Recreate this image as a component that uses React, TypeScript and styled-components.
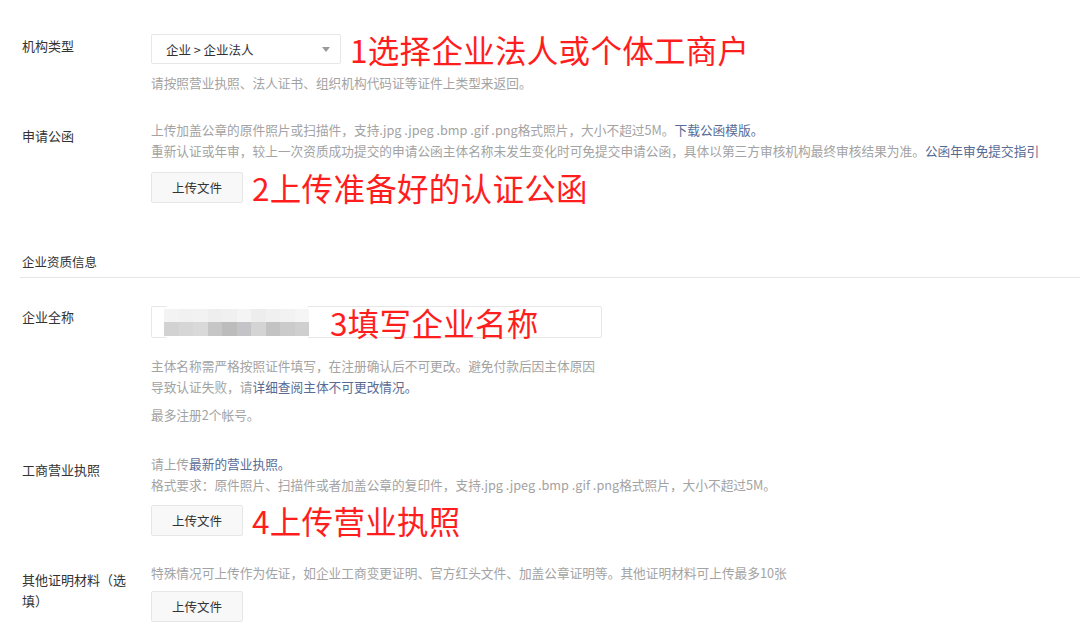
import React from "react";
import styled, { createGlobalStyle } from "styled-components";

const Global = createGlobalStyle`
  html, body { margin: 0; padding: 0; background: #fff; }
  body {
    font-family: "Noto Sans CJK SC", "Microsoft YaHei", "Liberation Sans", sans-serif;
    color: #333;
    width: 1080px;
    height: 644px;
    overflow: hidden;
  }
`;

const Page = styled.div`
  padding: 31px 0 0 22px;
  display: flex;
  flex-direction: column;
`;

const Row = styled.div<{ $mt?: number }>`
  display: grid;
  grid-template-columns: 129px 1fr;
  margin-top: ${(p) => p.$mt ?? 0}px;
`;

const Label = styled.div<{ $pt?: number }>`
  font-size: 13px;
  line-height: 21px;
  color: #333;
  padding-top: ${(p) => p.$pt ?? 0}px;
  width: 110px;
`;

const Field = styled.div`
  display: flex;
  flex-direction: column;
  align-items: flex-start;
`;

const Inline = styled.div`
  display: flex;
  align-items: center;
`;

const Select = styled.div`
  box-sizing: border-box;
  width: 190px;
  height: 30px;
  border: 1px solid #e7e7e7;
  border-radius: 2px;
  display: flex;
  align-items: center;
  justify-content: space-between;
  padding: 0 10px 0 14px;
  font-size: 12.5px;
  color: #333;
`;

const Caret = styled.span`
  width: 0;
  height: 0;
  border-left: 4px solid transparent;
  border-right: 4px solid transparent;
  border-top: 5px solid #9a9a9a;
`;

const Note = styled.span`
  color: #ff1e1e;
  font-size: 31.5px;
  line-height: 36px;
  white-space: nowrap;
  margin-left: 9px;
  letter-spacing: 0.3px;
`;

const Hint = styled.div<{ $mt?: number }>`
  font-size: 12.7px;
  line-height: 21px;
  color: #a3a3a3;
  margin-top: ${(p) => p.$mt ?? 0}px;
  white-space: nowrap;
`;

const Link = styled.span`
  color: #576b95;
`;

const Button = styled.div`
  box-sizing: border-box;
  width: 92px;
  height: 31px;
  border: 1px solid #e6e6e6;
  border-radius: 2px;
  background: #f8f8f8;
  font-size: 12.5px;
  color: #333;
  display: flex;
  align-items: center;
  justify-content: center;
`;

const ButtonRow = styled(Inline)<{ $mt?: number }>`
  margin-top: ${(p) => p.$mt ?? 0}px;
`;

const Section = styled.div`
  margin-top: 47px;
  font-size: 12.5px;
  color: #333;
  line-height: 20px;
  padding-bottom: 5px;
  border-bottom: 1px solid #e5e5e5;
  margin-left: -2px;
  padding-left: 2px;
`;

const Input = styled.div`
  box-sizing: border-box;
  width: 451px;
  height: 32px;
  border: 1px solid #e7e7e7;
  border-radius: 2px;
  display: flex;
  align-items: center;
  position: relative;
`;

const Blur = styled.div`
  position: absolute;
  left: 8px;
  top: -4px;
  width: 154px;
  height: 38px;
  border-radius: 16px;
  background: #fff;
  overflow: hidden;
  display: flex;
  flex-direction: column;
  justify-content: center;
  padding-left: 4px;
  box-sizing: border-box;
`;

const BlurStrip = styled.div<{ $h: number }>`
  display: flex;
  height: ${(p) => p.$h}px;
  filter: blur(0.6px);
`;

const Cell = styled.div`
  width: 14.5px;
  height: 100%;
`;

const InputNote = styled(Note)`
  margin-left: 178px;
  line-height: 30px;
`;

const topShades = ["#f3f3f3", "#f1f1f1", "#f2f2f2", "#eeeeee", "#f0f0f0", "#f4f4f4", "#ededed", "#f0f0f0", "#f2f2f2", "#f5f5f5"];
const botShades = ["#d2d2d2", "#d6d6d6", "#d9d9d9", "#c6c6c6", "#bcbcbc", "#c4c4c8", "#d4d4d4", "#c3c3c3", "#cbcbcb", "#cfcfcf"];

export default function App() {
  return (
    <>
      <Global />
      <Page>
        <Row>
          <Label $pt={4}>机构类型</Label>
          <Field>
            <Inline>
              <Select>
                <span>企业 &gt; 企业法人</span>
                <Caret />
              </Select>
              <Note>1选择企业法人或个体工商户</Note>
            </Inline>
            <Hint $mt={5}>请按照营业执照、法人证书、组织机构代码证等证件上类型来返回。</Hint>
          </Field>
        </Row>

        <Row $mt={26}>
          <Label $pt={6}>申请公函</Label>
          <Field>
            <Hint>
              上传加盖公章的原件照片或扫描件，支持.jpg .jpeg .bmp .gif .png格式照片，大小不超过5M。<Link>下载公函模版。</Link>
            </Hint>
            <Hint>
              重新认证或年审，较上一次资质成功提交的申请公函主体名称未发生变化时可免提交申请公函，具体以第三方审核机构最终审核结果为准。<Link>公函年审免提交指引</Link>
            </Hint>
            <ButtonRow $mt={8}>
              <Button>上传文件</Button>
              <Note>2上传准备好的认证公函</Note>
            </ButtonRow>
          </Field>
        </Row>

        <Section>企业资质信息</Section>

        <Row $mt={28}>
          <Label $pt={0}>企业全称</Label>
          <Field>
            <Input>
              <Blur>
                <BlurStrip $h={13}>
                  {topShades.map((c, i) => (
                    <Cell key={i} style={{ background: c }} />
                  ))}
                </BlurStrip>
                <BlurStrip $h={14}>
                  {botShades.map((c, i) => (
                    <Cell key={i} style={{ background: c }} />
                  ))}
                </BlurStrip>
              </Blur>
              <InputNote>3填写企业名称</InputNote>
            </Input>
            <Hint $mt={17}>主体名称需严格按照证件填写，在注册确认后不可更改。避免付款后因主体原因</Hint>
            <Hint>
              导致认证失败，请<Link>详细查阅主体不可更改情况。</Link>
            </Hint>
            <Hint $mt={7}>最多注册2个帐号。</Hint>
          </Field>
        </Row>

        <Row $mt={28}>
          <Label $pt={6}>工商营业执照</Label>
          <Field>
            <Hint>
              请上传<Link>最新的营业执照。</Link>
            </Hint>
            <Hint>格式要求：原件照片、扫描件或者加盖公章的复印件，支持.jpg .jpeg .bmp .gif .png格式照片，大小不超过5M。</Hint>
            <ButtonRow $mt={7}>
              <Button>上传文件</Button>
              <Note>4上传营业执照</Note>
            </ButtonRow>
          </Field>
        </Row>

        <Row $mt={24}>
          <Label $pt={7}>其他证明材料（选填）</Label>
          <Field>
            <Hint>特殊情况可上传作为佐证，如企业工商变更证明、官方红头文件、加盖公章证明等。其他证明材料可上传最多10张</Hint>
            <ButtonRow $mt={8}>
              <Button>上传文件</Button>
            </ButtonRow>
          </Field>
        </Row>
      </Page>
    </>
  );
}
